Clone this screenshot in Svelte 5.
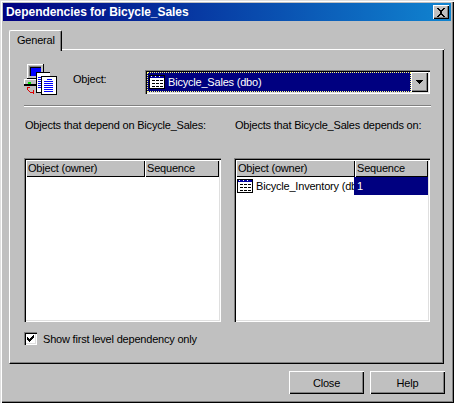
<script lang="ts">
  const cols = ["Object (owner)", "Sequence"];
</script>

{#snippet tableIcon()}
  <svg class="table-icon" width="16" height="14" viewBox="0 0 16 14" shape-rendering="crispEdges">
    <rect x="0" y="0" width="16" height="14" fill="#000" />
    <rect x="1" y="1" width="14" height="2" fill="#0000a0" />
    <rect x="2" y="1" width="1" height="1" fill="#fff" />
    <rect x="6" y="1" width="1" height="1" fill="#fff" />
    <rect x="10" y="1" width="1" height="1" fill="#fff" />
    <rect x="1" y="3" width="14" height="10" fill="#fff" />
    <path d="M3 5h3v1H3zM7 5h3v1H7zM11 5h3v1h-3zM3 8h3v1H3zM7 8h3v1H7zM11 8h3v1h-3zM3 11h3v1H3zM7 11h3v1H7zM11 11h3v1h-3z" fill="#000" />
  </svg>
{/snippet}

<div class="window">
  <div class="titlebar">
    <span class="title">Dependencies for Bicycle_Sales</span>
    <button class="close-x" aria-label="Close">
      <svg width="10" height="9" viewBox="0 0 10 9" shape-rendering="crispEdges">
        <path d="M1 0h2v1h1v1h2V1h1V0h2v1H8v1H7v1H6v3h1v1h1v1h1v1H7V8H6V7H4v1H3v1H1V8h1V7h1V6h1V3H3V2H2V1H1z" fill="#000" />
      </svg>
    </button>
  </div>

  <div class="tabs">
    <div class="tab">General</div>
    <div class="tab-line"></div>
  </div>

  <div class="panel">
    <div class="object-row">
      <svg class="object-icon" width="33" height="32" viewBox="0 0 33 32" shape-rendering="crispEdges">
        <!-- monitor -->
        <rect x="3" y="1" width="16" height="14" fill="#c0c0c0" />
        <path d="M3 1h16v1H4v13H3z" fill="#fff" />
        <path d="M19 1h1v15H3v-1h16z" fill="#000" />
        <rect x="5" y="3" width="12" height="10" fill="#808080" />
        <rect x="6" y="4" width="11" height="9" fill="#0000ff" />
        <rect x="6" y="4" width="11" height="1" fill="#000" />
        <rect x="6" y="4" width="1" height="9" fill="#000" />
        <!-- base -->
        <rect x="0" y="16" width="17" height="6" fill="#c0c0c0" />
        <path d="M0 16h17v1H1v5H0z" fill="#fff" />
        <rect x="0" y="21" width="17" height="2" fill="#000" />
        <rect x="4" y="19" width="3" height="2" fill="#00e000" />
        <!-- back page -->
        <rect x="12" y="10" width="14" height="20" fill="#fff" />
        <path d="M12 9h14v1H13v19h-1z" fill="#000" />
        <rect x="12" y="29" width="15" height="1" fill="#000" />
        <rect x="14" y="14" width="3" height="1" fill="#00f" />
        <path d="M14 16h3v1h-3zM14 18h3v1h-3zM14 20h3v1h-3zM14 22h3v1h-3zM14 24h3v1h-3z" fill="#00f" />
        <!-- front page -->
        <rect x="18" y="14" width="14" height="17" fill="#fff" />
        <rect x="17" y="13" width="15" height="1" fill="#000" />
        <rect x="17" y="13" width="1" height="18" fill="#000" />
        <rect x="32" y="13" width="1" height="19" fill="#000" />
        <rect x="17" y="31" width="16" height="1" fill="#000" />
        <rect x="23" y="16" width="5" height="1" fill="#00f" />
        <path d="M20 18h9v1h-9zM20 20h9v1h-9zM20 22h9v1h-9zM20 24h9v1h-9zM20 26h9v1h-9zM20 28h9v1h-9z" fill="#00f" />
        <!-- red arrow -->
        <path d="M3 24h3v1H4v2h1v1h1v1h3v-2h1v4H9v-1H6v-1H5v-1H4v-1H3z" fill="#e00000" />
      </svg>
      <span class="object-label">Object:</span>
      <div class="combo">
        <div class="combo-value">
          {@render tableIcon()}
          <span class="combo-text">Bicycle_Sales (dbo)</span>
        </div>
        <div class="combo-btn">
          <svg width="7" height="4" viewBox="0 0 7 4" shape-rendering="crispEdges">
            <path d="M0 0h7v1H6v1H5v1H4v1H3V3H2V2H1V1H0z" fill="#000" />
          </svg>
        </div>
      </div>
    </div>

    <div class="separator"></div>

    <div class="columns">
      <div class="column">
        <div class="caption">Objects that depend on Bicycle_Sales:</div>
        <div class="list">
          <div class="list-head">
            <div class="head-cell">{cols[0]}</div>
            <div class="head-cell">{cols[1]}</div>
          </div>
        </div>
      </div>
      <div class="column">
        <div class="caption">Objects that Bicycle_Sales depends on:</div>
        <div class="list">
          <div class="list-head">
            <div class="head-cell">{cols[0]}</div>
            <div class="head-cell">{cols[1]}</div>
          </div>
          <div class="list-row">
            <div class="row-name">
              {@render tableIcon()}
              <span class="row-text">Bicycle_Inventory (dbo)</span>
            </div>
            <div class="row-seq">1</div>
          </div>
        </div>
      </div>
    </div>

    <div class="check-row">
      <div class="checkbox">
        <svg width="7" height="7" viewBox="0 0 7 7" shape-rendering="crispEdges">
          <path d="M0 2h1v1h1v1h1V3h1V2h1V1h1V0h1v3H6v1H5v1H4v1H3v1H2V6H1V5H0z" fill="#000" />
        </svg>
      </div>
      <span>Show first level dependency only</span>
    </div>
  </div>

  <div class="footer">
    <button class="btn">Close</button>
    <button class="btn">Help</button>
  </div>
</div>

<style>
  :global(body) {
    margin: 0;
    background: #c0c0c0;
  }

  .window {
    box-sizing: border-box;
    width: 454px;
    height: 403px;
    padding: 3px 3px 0;
    display: flex;
    flex-direction: column;
    background: #c0c0c0;
    font-family: "Liberation Sans", Arial, sans-serif;
    font-size: 11px;
    letter-spacing: -0.2px;
    color: #000;
    box-shadow:
      inset 1px 1px 0 #dfdfdf,
      inset 2px 2px 0 #fff,
      inset -1px -1px 0 #000,
      inset -2px -2px 0 #808080;
    overflow: hidden;
  }

  .titlebar {
    height: 18px;
    flex-shrink: 0;
    display: flex;
    align-items: center;
    justify-content: space-between;
    padding: 0 2px 0 3px;
    background: linear-gradient(to right, #000080, #1084d0);
  }

  .title {
    color: #fff;
    font-weight: 700;
    font-size: 12px;
    letter-spacing: -0.05px;
  }

  .close-x {
    box-sizing: border-box;
    width: 16px;
    height: 14px;
    padding: 0;
    display: flex;
    align-items: center;
    justify-content: center;
    background: #c0c0c0;
    border: none;
    box-shadow:
      inset 1px 1px 0 #fff,
      inset -1px -1px 0 #000,
      inset -2px -2px 0 #808080;
  }

  .tabs {
    display: flex;
    align-items: flex-end;
    height: 29px;
    flex-shrink: 0;
    margin: 0 6px;
  }

  .tab {
    box-sizing: border-box;
    width: 53px;
    height: 21px;
    padding: 3px 0 0 7px;
    background: #c0c0c0;
    border-top: 1px solid #fff;
    border-left: 1px solid #fff;
    border-right: 1px solid #000;
    border-radius: 2px 2px 0 0;
    box-shadow: inset -1px 0 0 #808080;
    position: relative;
    z-index: 1;
    margin-bottom: -1px;
  }

  .tab-line {
    flex: 1;
    height: 0;
    border-top: 1px solid #fff;
    border-right: 1px solid #000;
  }

  .panel {
    box-sizing: border-box;
    width: 435px;
    height: 314px;
    margin-left: 6px;
    flex-shrink: 0;
    padding: 20px 13px 0 14px;
    border-left: 1px solid #fff;
    border-right: 1px solid #000;
    border-bottom: 1px solid #000;
    box-shadow: inset -1px -1px 0 #808080;
  }

  .object-row {
    display: flex;
    align-items: flex-start;
    height: 36px;
  }

  .object-icon {
    flex-shrink: 0;
    margin-top: -7px;
  }

  .object-label {
    margin-left: 16px;
    width: 72px;
    flex-shrink: 0;
    line-height: 18px;
  }

  .combo {
    box-sizing: border-box;
    width: 285px;
    height: 24px;
    display: flex;
    align-items: stretch;
    padding: 2px;
    background: #c0c0c0;
    box-shadow:
      inset 1px 1px 0 #808080,
      inset 2px 2px 0 #000,
      inset -1px -1px 0 #fff,
      inset -2px -2px 0 #dfdfdf;
  }

  .combo-value {
    flex: 1;
    min-width: 0;
    display: flex;
    align-items: center;
    gap: 3px;
    padding-left: 2px;
    background: #000080;
    color: #fff;
    outline: 1px dotted #ffff80;
    outline-offset: -1px;
  }

  .combo-text {
    line-height: 18px;
  }

  .combo-btn {
    box-sizing: border-box;
    width: 17px;
    flex-shrink: 0;
    display: flex;
    align-items: center;
    justify-content: center;
    background: #c0c0c0;
    box-shadow:
      inset 1px 1px 0 #fff,
      inset -1px -1px 0 #000,
      inset -2px -2px 0 #808080;
  }

  .separator {
    box-sizing: content-box;
    width: 407px;
    height: 1px;
    background: #808080;
    border-bottom: 1px solid #fff;
    margin-top: -1px;
  }

  .columns {
    display: grid;
    grid-template-columns: 197px 196px;
    column-gap: 13px;
    margin-top: 10px;
  }

  .caption {
    padding-left: 1px;
    line-height: 16px;
    white-space: nowrap;
  }

  .list {
    box-sizing: border-box;
    height: 164px;
    margin-top: 25px;
    padding: 2px;
    background: #fff;
    box-shadow:
      inset 1px 1px 0 #808080,
      inset 2px 2px 0 #000,
      inset -1px -1px 0 #fff,
      inset -2px -2px 0 #dfdfdf;
  }

  .list-head {
    display: grid;
    grid-template-columns: 119px 1fr;
    height: 17px;
  }

  .head-cell {
    box-sizing: border-box;
    padding-left: 2px;
    line-height: 16px;
    background: #c0c0c0;
    white-space: nowrap;
    overflow: hidden;
    box-shadow:
      inset 1px 1px 0 #fff,
      inset -1px -1px 0 #000;
  }

  .list-row {
    display: grid;
    grid-template-columns: 118px 1fr;
    height: 18px;
  }

  .row-name {
    display: flex;
    align-items: center;
    gap: 3px;
    padding-left: 1px;
    overflow: hidden;
    white-space: nowrap;
  }

  .table-icon {
    flex-shrink: 0;
  }

  .row-seq {
    padding-left: 3px;
    line-height: 18px;
    background: #000080;
    color: #fff;
  }

  .check-row {
    display: flex;
    align-items: center;
    gap: 6px;
    margin-top: 10px;
  }

  .checkbox {
    box-sizing: border-box;
    width: 13px;
    height: 13px;
    display: flex;
    align-items: center;
    justify-content: center;
    background: #fff;
    box-shadow:
      inset 1px 1px 0 #808080,
      inset 2px 2px 0 #000,
      inset -1px -1px 0 #fff,
      inset -2px -2px 0 #dfdfdf;
  }

  .footer {
    display: flex;
    justify-content: flex-end;
    gap: 6px;
    padding: 7px 6px 0 0;
  }

  .btn {
    box-sizing: border-box;
    width: 75px;
    height: 23px;
    padding: 0;
    border: none;
    background: #c0c0c0;
    font: inherit;
    letter-spacing: inherit;
    color: #000;
    box-shadow:
      inset 1px 1px 0 #fff,
      inset -1px -1px 0 #000,
      inset -2px -2px 0 #808080;
  }
</style>
